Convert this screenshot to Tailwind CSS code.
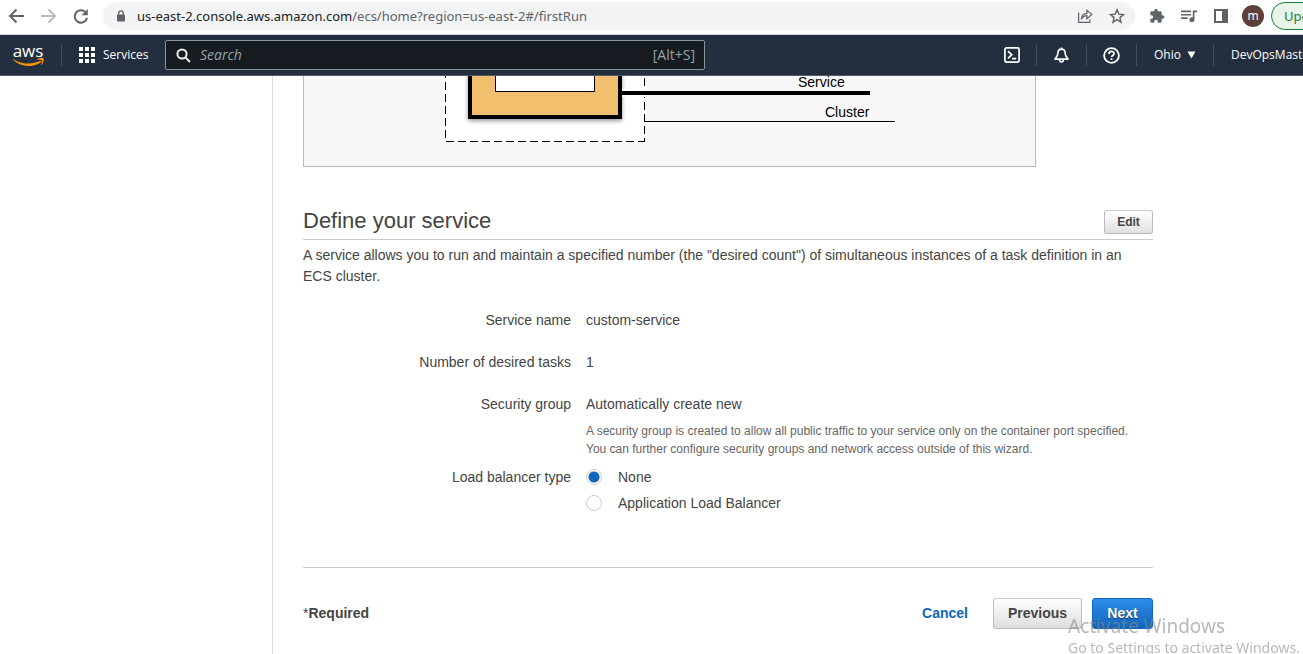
<!DOCTYPE html>
<html lang="en">
<head>
<meta charset="utf-8">
<meta name="viewport" content="width=device-width, initial-scale=1">
<title>Amazon ECS - Define your service</title>
<script src="https://cdn.jsdelivr.net/npm/@tailwindcss/browser@4"></script>
</head>
<body class="h-screen overflow-hidden flex flex-col bg-white text-[#444] font-['Liberation_Sans',Arial,sans-serif] text-sm">

  <!-- Browser toolbar -->
  <div class="flex shrink-0 items-center h-[35px] pb-[2px] pl-[6px] border-b border-[#d5d7da] text-[#5f6368] font-['Noto_Sans','Open_Sans',sans-serif] overflow-hidden">
    <div class="flex shrink-0 items-center gap-3">
      <button aria-label="Back" class="size-5"><svg viewBox="0 0 20 20" class="size-5" fill="none" stroke="currentColor" stroke-width="2"><path d="M18 10H4.500M10.500 3.500 4 10l6.500 6.500"/></svg></button>
      <button aria-label="Forward" class="size-5 text-[#babcbe]"><svg viewBox="0 0 20 20" class="size-5" fill="none" stroke="currentColor" stroke-width="2"><path d="M3 10h13.500M10.500 3.500 17 10l-6.500 6.500"/></svg></button>
      <button aria-label="Reload" class="size-5"><svg viewBox="0 0 20 20" class="size-5" fill="none" stroke="currentColor" stroke-width="2"><path d="M15.200 6A6.200 6.200 0 1 0 17 11.700"/><path d="M17.800 3v6.200h-6.200z" fill="currentColor" stroke="none"/></svg></button>
    </div>
    <div class="flex flex-1 min-w-0 items-center h-7 ml-[13px] pl-[13px] pr-[10px] rounded-full bg-[#f1f3f4]">
      <svg viewBox="0 0 10 12" class="w-[10px] h-3 shrink-0 mr-[11px]"><path d="M2.700 5V3.200a2.300 2.300 0 0 1 4.600 0V5" fill="none" stroke="currentColor" stroke-width="1.300"/><rect x="1" y="4.500" width="8" height="7" rx="1" fill="currentColor"/></svg>
      <p class="flex-1 truncate text-[13px] leading-5"><span class="text-[#202124]">us-east-2.console.aws.amazon.com</span>/ecs/home?region=us-east-2#/firstRun</p>
      <button aria-label="Share this page" class="size-4 mr-4"><svg viewBox="0 0 16 16" class="size-4" fill="none" stroke="currentColor" stroke-width="1.200"><path d="M1.600 4.500v9.900h11.300v-3"/><path d="M4.400 11.200C4.600 7.500 6.600 5.500 9.900 5.300V2.200L14.800 6.400 9.900 10.600V7.700C7.600 7.700 5.800 8.700 4.400 11.200z"/></svg></button>
      <button aria-label="Bookmark this page" class="size-4"><svg viewBox="0 0 16 16" class="size-4" fill="none" stroke="currentColor" stroke-width="1.400"><path d="m8 1.800 1.800 4.300 4.700.4-3.600 3.100 1.100 4.600L8 11.700l-4 2.500 1.100-4.600L1.500 6.500l4.700-.4z"/></svg></button>
    </div>
    <div class="flex shrink-0 items-center w-[168px] pl-[13px]">
      <button aria-label="Extensions" class="size-[18px] mr-[14px]"><svg viewBox="0 0 24 24" class="size-[18px] p-px" fill="currentColor"><path d="M20.500 11H19V7c0-1.100-.9-2-2-2h-4V3.500C13 2.120 11.880 1 10.500 1S8 2.120 8 3.500V5H4c-1.100 0-1.990.9-1.990 2v3.800H3.500c1.490 0 2.700 1.210 2.700 2.700s-1.210 2.700-2.700 2.700H2V20c0 1.100.9 2 2 2h3.800v-1.500c0-1.490 1.210-2.700 2.700-2.700s2.700 1.210 2.700 2.700V22H17c1.100 0 2-.9 2-2v-4h1.500c1.380 0 2.500-1.120 2.500-2.500S21.880 11 20.500 11z"/></svg></button>
      <button aria-label="Media controls" class="size-[18px] mr-[14px]"><svg viewBox="3 3 19 19" class="size-[18px] p-px" fill="currentColor"><path d="M15 6H3v2h12V6zm0 4H3v2h12v-2zM3 16h8v-2H3v2zM17 6v8.180c-.31-.11-.65-.18-1-.18-1.660 0-3 1.340-3 3s1.340 3 3 3 3-1.340 3-3V8h3V6h-5z"/></svg></button>
      <button aria-label="Side panel" class="size-[18px] mr-3"><svg viewBox="0 0 18 18" class="size-[18px]"><path d="M2 2h14v14H2zM4 4v10h6V4z" fill="currentColor" fill-rule="evenodd"/></svg></button>
      <button aria-label="Profile" class="size-[22px] shrink-0 rounded-full bg-[#5d4037] text-white text-xs leading-5">m</button>
      <button class="shrink-0 h-7 w-[90px] ml-[7px] pl-3 rounded-full border border-[#188038] bg-[#e8f3ec] text-[#188038] text-[13px] text-left">Update</button>
    </div>
  </div>

  <!-- AWS console navigation -->
  <header class="flex shrink-0 items-center h-[41px] border-b border-[#545b64] bg-[#232f3e] text-white font-['Open_Sans','Noto_Sans',sans-serif] text-xs font-medium overflow-hidden">
    <a href="#" aria-label="AWS" class="flex flex-col items-center shrink-0 w-8 ml-3">
      <span class="text-[17px] leading-[14px]">aws</span>
      <svg viewBox="0 0 32 9" class="w-8 h-[9px]" fill="#ff9900"><path d="M1.500 1.400c8 4.900 18.300 5.500 26.500 1.700.9-.4 1.500.5.700 1.100C20.700 9.900 8.800 9.100 1.200 2c-.5-.5-.1-.9.300-.6z"/><path d="M25.200.9c1.800-1 5.700-1.100 6.300-.4.600.8-.2 4.700-1.900 6.300-.4.300-.7.200-.5-.3.500-1.200 1.100-3.300.8-4-.4-.7-2.900-.7-4.400-.9-.6-.1-.7-.5-.3-.7z"/></svg>
    </a>
    <span class="shrink-0 w-px h-[22px] ml-[17px] bg-[#414d5c]"></span>
    <button class="flex shrink-0 items-center gap-2 ml-[17px] w-[86px]">
      <svg viewBox="0 0 16 16" class="size-4 shrink-0" fill="currentColor"><path d="M0 0h4v4H0zM6 0h4v4H6zM12 0h4v4h-4zM0 6h4v4H0zM6 6h4v4H6zM12 6h4v4h-4zM0 12h4v4H0zM6 12h4v4H6zM12 12h4v4h-4z"/></svg>
      <span>Services</span>
    </button>
    <label class="flex items-center w-[540px] h-[30px] pl-[10px] pr-[9px] rounded-[2px] border border-[#879596] bg-[#161a21]">
      <svg viewBox="0 0 15 15" class="size-[15px] shrink-0 mr-[9px]" fill="none" stroke="#eaeded" stroke-width="2"><circle cx="6" cy="6" r="4.600"/><path d="m9.400 9.400 4.600 4.600"/></svg>
      <input type="text" aria-label="Search" placeholder="Search" class="flex-1 min-w-0 bg-transparent outline-none text-sm font-normal placeholder:italic placeholder:text-[#95a5a6]">
      <span class="text-sm font-normal text-[#95a5a6]">[Alt+S]</span>
    </label>
    <div class="flex shrink-0 items-center ml-auto w-[315px] pl-4 overflow-hidden whitespace-nowrap">
      <button aria-label="CloudShell" class="shrink-0 size-4"><svg viewBox="0 0 16 16" class="size-4" fill="none" stroke="currentColor" stroke-width="1.700"><rect x=".9" y=".9" width="14.200" height="14.200" rx="1.500"/><path d="m4 4.200 3.700 3.600L4 11.400M8 11.600h4.200"/></svg></button>
      <span class="shrink-0 w-px h-[22px] mx-4 bg-[#414d5c]"></span>
      <button aria-label="Notifications" class="shrink-0 w-[17px]"><svg viewBox="0 0 18 18" class="size-[17px]" fill="none" stroke="currentColor" stroke-width="1.700" stroke-linejoin="round"><path d="M9 2.300c-2.500 0-3.800 1.800-3.800 4.100 0 2.800-1.300 4-3.200 6.400h14c-1.900-2.400-3.200-3.600-3.200-6.400 0-2.300-1.300-4.100-3.800-4.100zM6.900 13c0 3.900 4.200 3.900 4.200 0M9 .6v1.500"/></svg></button>
      <span class="shrink-0 w-px h-[22px] mx-4 bg-[#414d5c]"></span>
      <button aria-label="Help" class="shrink-0 size-[17px]"><svg viewBox="0 0 17 17" class="size-[17px]" fill="none" stroke="currentColor" stroke-width="1.800"><circle cx="8.500" cy="8.500" r="7.400"/><path d="M6 6.900C6 3.700 11 3.700 11 6.700c0 1.700-2.500 1.700-2.500 3.400M8.500 11.300v1.800"/></svg></button>
      <span class="shrink-0 w-px h-[22px] ml-4 mr-[17px] bg-[#414d5c]"></span>
      <button class="flex shrink-0 items-center justify-between w-[42px] mr-[17px]"><span>Ohio</span><svg viewBox="0 0 9 8" class="w-[9px] h-2" fill="currentColor"><path d="M.5.500h8l-4 7z"/></svg></button>
      <span class="shrink-0 w-px h-[22px] mr-[17px] bg-[#414d5c]"></span>
      <button class="shrink-0">DevOpsMaster</button>
    </div>
  </header>

  <div class="flex flex-1 min-h-0">
    <aside class="shrink-0 w-[273px] border-r border-[#ddd]"></aside>
    <main class="flex-1 max-w-[880px] pl-[30px]">

      <!-- Lower end of the ECS object diagram -->
      <div class="max-w-[733px] border border-t-0 border-[#bbb] bg-[#f8f8f8]">
        <svg viewBox="0 0 731 90" class="block w-full" role="img" aria-label="Service inside cluster" font-family="Liberation Sans, Arial, sans-serif" font-size="14">
          <defs><filter id="shadow" x="-10%" y="-10%" width="120%" height="130%"><feDropShadow dx="0" dy="2" stdDeviation="2" flood-color="#000" flood-opacity=".4"/></filter></defs>
          <path d="M141 0h200v65H141z" fill="#fff"/>
          <path d="M141.500 -6V65.500H341" fill="none" stroke="#000" stroke-dasharray="8 4"/>
          <path d="M340.500 2V66" fill="none" stroke="#000" stroke-dasharray="8 4"/>
          <path d="M166-20h150v61H166z" fill="#f2bf6e" stroke="#000" stroke-width="4" filter="url(#shadow)"/>
          <path d="M191.500-2h99v17.500h-99z" fill="#fff" stroke="#000"/>
          <path d="M318 13h23v8h-23z" fill="#fff"/>
          <path d="M317 17h249" stroke="#000" stroke-width="4"/>
          <path d="M340 45.500h251" stroke="#000"/>
          <text x="494" y="11">Service</text>
          <text x="521" y="41">Cluster</text>
        </svg>
      </div>

      <section>
        <div class="flex items-end justify-between h-[73px] pb-[5px] border-b border-[#ccc]">
          <h2 class="text-[22px] leading-[26px]">Define your service</h2>
          <button class="h-6 w-[49px] rounded-[3px] border border-[#bbb] border-t-[#ccc] bg-linear-to-b from-white to-[#e0e0e0] text-xs font-bold">Edit</button>
        </div>
        <p class="mt-[5px] leading-[21px]">A service allows you to run and maintain a specified number (the "desired count") of simultaneous instances of a task definition in an ECS cluster.</p>

        <dl class="grid grid-cols-[268px_1fr] gap-x-[15px] mt-[23px] leading-5">
          <dt class="text-right">Service name</dt><dd class="mb-[22px]">custom-service</dd>
          <dt class="text-right">Number of desired tasks</dt><dd class="mb-[22px]">1</dd>
          <dt class="text-right">Security group</dt>
          <dd>Automatically create new
            <p class="mt-2 pr-4 text-xs leading-[18px] text-[#666]">A security group is created to allow all public traffic to your service only on the container port specified. You can further configure security groups and network access outside of this wizard.</p>
          </dd>
        </dl>
        <div role="radiogroup" aria-labelledby="lb-type" class="grid grid-cols-[268px_1fr] gap-x-[15px] mt-[9px] leading-5">
          <span id="lb-type" class="text-right">Load balancer type</span>
          <div class="flex flex-col gap-[6px]">
            <label class="flex items-center gap-4"><input type="radio" name="lb" checked class="appearance-none size-4 rounded-full border border-[#ccc] bg-white checked:bg-[radial-gradient(circle,#1166bb_5px,#fff_6px)]">None</label>
            <label class="flex items-center gap-4"><input type="radio" name="lb" class="appearance-none size-4 rounded-full border border-[#ccc] bg-white checked:bg-[radial-gradient(circle,#1166bb_5px,#fff_6px)]">Application Load Balancer</label>
          </div>
        </div>
      </section>

      <footer class="flex items-center mt-[54px] pt-[30px] border-t border-[#ccc] font-bold">
        <p class="flex-1 pb-[2px]"><span class="font-normal">*</span>Required</p>
        <a href="#" class="mr-[25px] pb-[2px] text-[#1166bb]">Cancel</a>
        <button class="h-[31px] w-[89px] mr-[10px] pb-[2px] rounded-[3px] border border-[#bbb] border-t-[#ccc] bg-linear-to-b from-white to-[#ddd]">Previous</button>
        <button class="h-[31px] w-[61px] pb-[2px] rounded-[3px] border border-[#1166bb] bg-linear-to-b from-[#2d8cea] to-[#1166bb] text-white text-shadow-[0_1px_1px_#0008]">Next</button>
      </footer>
    </main>
  </div>

  <!-- Windows activation notice, lies over the page -->
  <div class="fixed right-0 bottom-[-4px] w-[235px] whitespace-nowrap pointer-events-none text-[#888]/60 font-['Noto_Sans','Open_Sans',sans-serif]">
    <p class="text-[19px] leading-6">Activate Windows</p>
    <p class="text-sm leading-5">Go to Settings to activate Windows.</p>
  </div>
</body>
</html>
